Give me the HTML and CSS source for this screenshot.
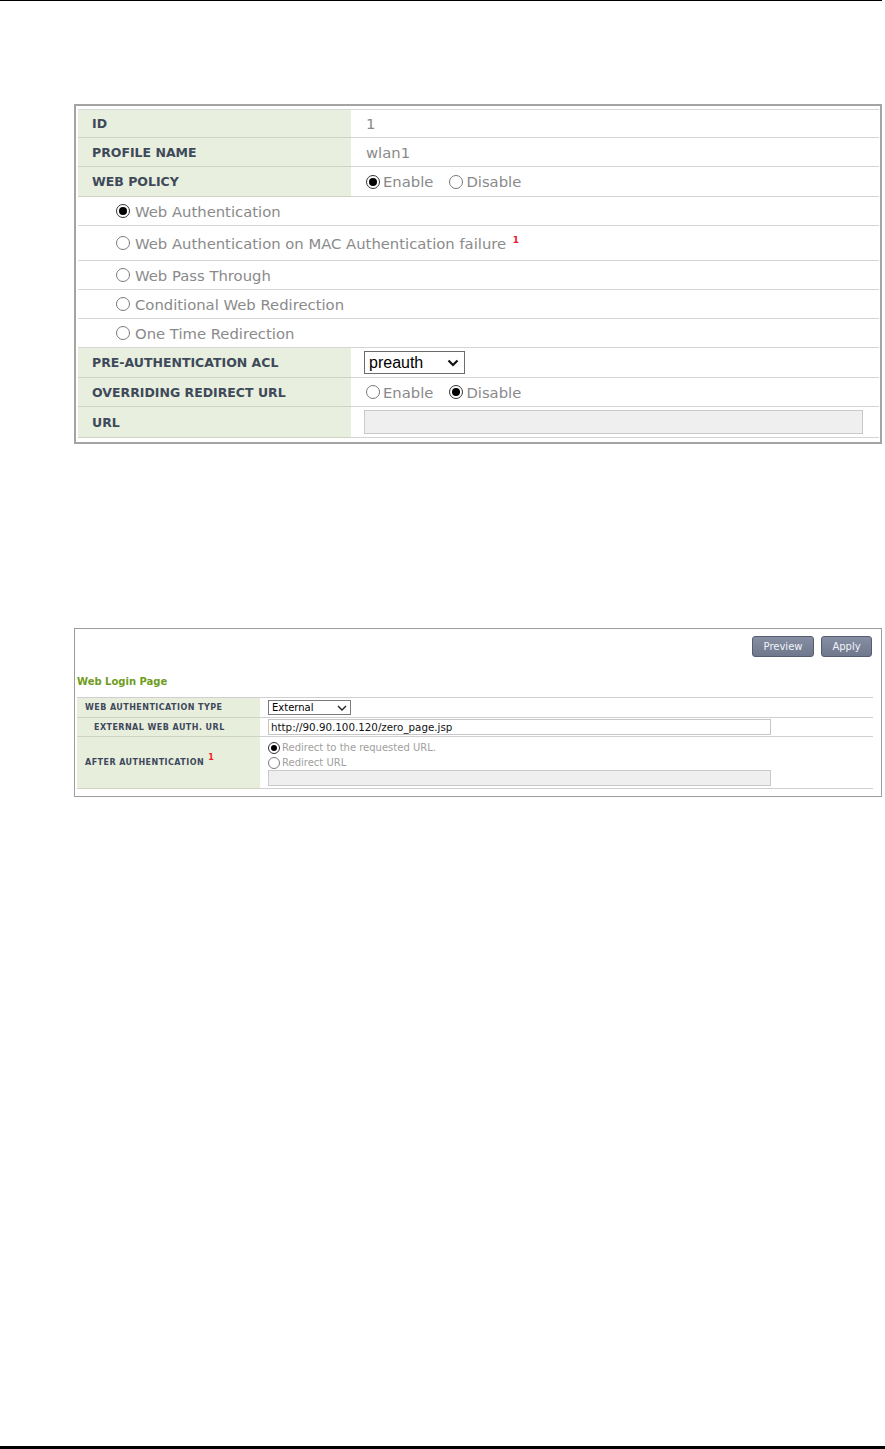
FILE: index.html
```html
<!DOCTYPE html>
<html>
<head>
<meta charset="utf-8">
<link rel="stylesheet" href="styles.css">
</head>
<body>
<div class="page">
  <div class="top-rule"></div>

  <div class="panel1">
    <div class="tbl1">
      <div class="row h28"><div class="lbl">ID</div><div class="val"><span class="txt">1</span></div></div>
      <div class="row"><div class="lbl">PROFILE NAME</div><div class="val"><span class="txt">wlan1</span></div></div>
      <div class="row h30"><div class="lbl">WEB POLICY</div><div class="val">
        <span class="opt"><span class="radio on"></span><span class="txt">Enable</span></span>
        <span class="opt"><span class="radio"></span><span class="txt">Disable</span></span>
      </div></div>
      <div class="row full"><span class="opt wide"><span class="radio on"></span><span class="txt">Web Authentication</span></span></div>
      <div class="row full h35"><span class="opt wide"><span class="radio"></span><span class="txt">Web Authentication on MAC Authentication failure <sup class="note">1</sup></span></span></div>
      <div class="row full"><span class="opt wide"><span class="radio"></span><span class="txt">Web Pass Through</span></span></div>
      <div class="row full"><span class="opt wide"><span class="radio"></span><span class="txt">Conditional Web Redirection</span></span></div>
      <div class="row full"><span class="opt wide"><span class="radio"></span><span class="txt">One Time Redirection</span></span></div>
      <div class="row h30"><div class="lbl">PRE-AUTHENTICATION ACL</div><div class="val">
        <div class="select1"><span>preauth</span>
          <svg class="chev" width="12" height="8" viewBox="0 0 12 8"><polyline points="1.5,1.5 6,6 10.5,1.5" fill="none" stroke="#111" stroke-width="2.2"/></svg>
        </div>
      </div></div>
      <div class="row"><div class="lbl">OVERRIDING REDIRECT URL</div><div class="val">
        <span class="opt"><span class="radio"></span><span class="txt">Enable</span></span>
        <span class="opt"><span class="radio on"></span><span class="txt">Disable</span></span>
      </div></div>
      <div class="row h31"><div class="lbl">URL</div><div class="val"><div class="input1"></div></div></div>
    </div>
  </div>

  <div class="panel2">
    <div class="btns">
      <div class="btn preview">Preview</div>
      <div class="btn apply">Apply</div>
    </div>
    <div class="title">Web Login Page</div>
    <div class="tbl2">
      <div class="row2 r20"><div class="lbl2">WEB AUTHENTICATION TYPE</div><div class="val2">
        <div class="select2"><span>External</span>
          <svg class="chev2" width="10" height="6" viewBox="0 0 10 6"><polyline points="1,1 5,5 9,1" fill="none" stroke="#222" stroke-width="1.4"/></svg>
        </div>
      </div></div>
      <div class="row2 r19"><div class="lbl2 indent">EXTERNAL WEB AUTH. URL</div><div class="val2">
        <div class="input2">http://90.90.100.120/zero_page.jsp</div>
      </div></div>
      <div class="row2 r52"><div class="lbl2"><span>AFTER AUTHENTICATION <sup class="note2">1</sup></span></div><div class="val2 stack">
        <span class="opt2"><span class="radio sm on"></span><span>Redirect to the requested URL.</span></span>
        <span class="opt2"><span class="radio sm"></span><span>Redirect URL</span></span>
        <div class="input3"></div>
      </div></div>
    </div>
  </div>

  <div class="bottom-rule"></div>
</div>
</body>
</html>
```

FILE: styles.css
```css
html, body {
  margin: 0;
  padding: 0;
  background: #fff;
}
.page {
  width: 885px;
  min-height: 1449px;
  display: flex;
  flex-direction: column;
  font-family: "DejaVu Sans", Verdana, sans-serif;
}
.top-rule {
  width: 882px;
  height: 1px;
  background: #000;
  flex: none;
}
.bottom-rule {
  margin-top: auto;
  height: 3px;
  background: #000;
  flex: none;
}

/* ---------- panel 1 ---------- */
.panel1 {
  margin: 103px 0 0 74px;
  width: 808px;
  box-sizing: border-box;
  border: 2px solid #a4a4a4;
  padding: 3px 1px 4px 2px;
  flex: none;
}
.tbl1 {
  border-top: 1px solid #d8d8d8;
}
.row {
  display: flex;
  height: 29px;
}
.row.h28 { height: 28px; }
.row.h30 { height: 30px; }
.row.h31 { height: 31px; }
.row.h35 { height: 35px; }
.lbl {
  width: 273px;
  flex: none;
  box-sizing: border-box;
  background: #e9efdf;
  border-bottom: 1px solid #cdd4c4;
  padding-left: 14px;
  display: flex;
  align-items: center;
  font-weight: bold;
  font-size: 12.5px;
  color: #3e4a5a;
}
.val {
  flex: 1;
  box-sizing: border-box;
  border-bottom: 1px solid #d4d4d4;
  padding-left: 13px;
  display: flex;
  align-items: center;
  gap: 16px;
}
.row.full {
  box-sizing: border-box;
  border-bottom: 1px solid #d4d4d4;
  padding-left: 38px;
  align-items: center;
}
.txt {
  font-size: 14.8px;
  color: #8a8a8a;
}
.val > .txt {
  margin-left: 2px;
}
.opt {
  display: inline-flex;
  align-items: center;
  gap: 3px;
}
.val .opt:first-child { margin-left: 2px; }
.opt.wide { gap: 5px; }
.note {
  color: #e8202a;
  font-size: 9px;
  font-weight: bold;
  vertical-align: 6px;
  line-height: 0;
  margin-left: 2px;
}
.radio {
  width: 14px;
  height: 14px;
  box-sizing: border-box;
  border: 1px solid #7a7a7a;
  border-radius: 50%;
  background: #fff;
  display: inline-flex;
  align-items: center;
  justify-content: center;
  flex: none;
}
.radio.on {
  border-color: #333;
}
.radio.on::after {
  content: "";
  width: 8px;
  height: 8px;
  border-radius: 50%;
  background: #000;
}
.select1 {
  width: 101px;
  height: 23px;
  box-sizing: border-box;
  border: 1px solid #6b6b6b;
  display: flex;
  align-items: center;
  justify-content: space-between;
  padding: 0 5px 0 4px;
  font-family: "Liberation Sans", Arial, sans-serif;
  font-size: 16px;
  color: #000;
  background: #fff;
}
.chev { display: block; }
.input1 {
  width: 499px;
  height: 24px;
  box-sizing: border-box;
  border: 1px solid #c9c9c9;
  background: #efefef;
}

/* ---------- panel 2 ---------- */
.panel2 {
  margin: 184px 0 0 74px;
  width: 808px;
  box-sizing: border-box;
  border: 1px solid #9c9c9c;
  padding: 7px 9px 7px 2px;
  flex: none;
}
.btns {
  display: flex;
  justify-content: flex-end;
  gap: 7px;
  height: 21px;
}
.btn {
  height: 21px;
  box-sizing: border-box;
  border: 1px solid #565d6f;
  border-radius: 3px;
  background: linear-gradient(#858ea3, #6f788d);
  color: #f2f4f8;
  font-size: 10px;
  display: flex;
  align-items: center;
  justify-content: center;
}
.btn.preview { width: 62px; }
.btn.apply { width: 51px; }
.title {
  margin-top: 18px;
  height: 14px;
  line-height: 14px;
  font-size: 10px;
  font-weight: bold;
  color: #6f9c22;
}
.tbl2 {
  margin-top: 8px;
  margin-right: -1px;
  border-top: 1px solid #cfcfcf;
}
.row2 {
  display: flex;
}
.row2.r20 { height: 20px; }
.row2.r19 { height: 19px; }
.row2.r52 { height: 52px; }
.lbl2 {
  width: 183px;
  flex: none;
  box-sizing: border-box;
  background: #e8eedc;
  border-bottom: 1px solid #cdd4c2;
  padding-left: 8px;
  display: flex;
  align-items: center;
  font-size: 8px;
  font-weight: bold;
  letter-spacing: 0.45px;
  color: #3d495c;
}
.lbl2.indent { padding-left: 17px; }
.note2 {
  color: #ee1c25;
  font-size: 8px;
  font-weight: bold;
  vertical-align: 5px;
  line-height: 0;
  margin-left: 1px;
  letter-spacing: 0;
}
.val2 {
  flex: 1;
  box-sizing: border-box;
  border-bottom: 1px solid #d0d0d0;
  padding-left: 8px;
  display: flex;
  align-items: center;
}
.val2.stack {
  flex-direction: column;
  align-items: flex-start;
  padding-top: 3px;
}
.select2 {
  width: 83px;
  height: 15px;
  box-sizing: border-box;
  border: 1px solid #7a7a7a;
  display: flex;
  align-items: center;
  justify-content: space-between;
  padding: 0 3px 0 3px;
  font-size: 10px;
  color: #000;
}
.chev2 { display: block; }
.input2 {
  width: 503px;
  height: 16px;
  box-sizing: border-box;
  border: 1px solid #c6c6c6;
  font-size: 10.3px;
  line-height: 14px;
  padding-left: 2px;
  color: #111;
}
.opt2 {
  height: 15px;
  display: inline-flex;
  align-items: center;
  gap: 2px;
  font-size: 10px;
  color: #a0a0a0;
}
.radio.sm {
  width: 12px;
  height: 12px;
}
.radio.sm.on::after {
  width: 6px;
  height: 6px;
}
.input3 {
  width: 503px;
  height: 16px;
  box-sizing: border-box;
  border: 1px solid #c9c9c9;
  background: #efefef;
}
```
